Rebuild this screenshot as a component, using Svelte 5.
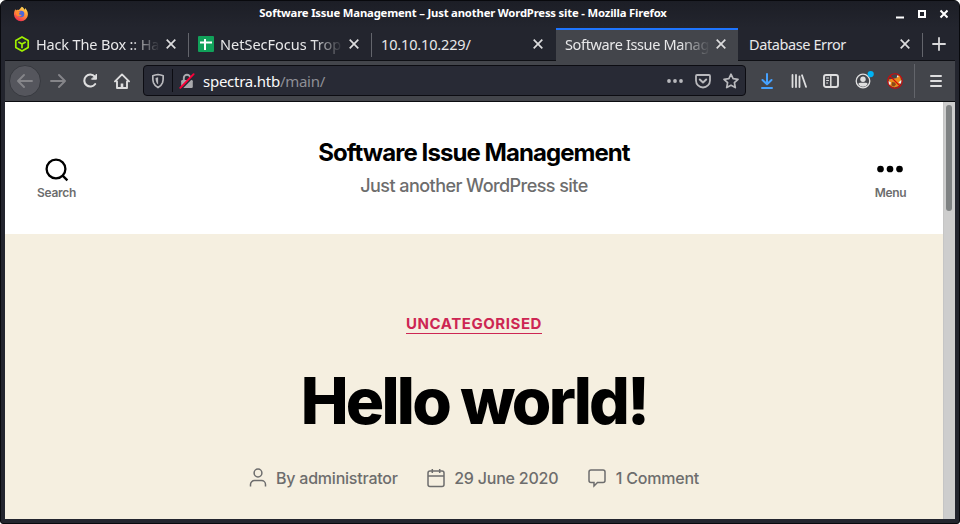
<script>
  const tabs = [
    { title: 'Hack The Box :: Ha', icon: 'htb', w: 184, spacing: -0.16, fade: true },
    { title: 'NetSecFocus Trop', icon: 'sheet', w: 183, spacing: 0, fade: true },
    { title: '10.10.10.229/', w: 184, spacing: -0.15 },
    { title: 'Software Issue Manag', w: 182, spacing: -0.36, fade: true, active: true },
    { title: 'Database Error', w: 185, spacing: -0.4 }
  ];
</script>

<div class="window">
  <header class="titlebar">
    <svg class="fox" width="16" height="16" viewBox="0 0 16 16">
      <defs>
        <linearGradient id="flame" x1="0.8" y1="0" x2="0.3" y2="1">
          <stop offset="0" stop-color="#ffe45a" /><stop offset=".45" stop-color="#ff9638" /><stop offset="1" stop-color="#f02852" />
        </linearGradient>
      </defs>
      <path fill="url(#flame)" d="M8.8.8C10.3 1.4 11 2.6 11.4 3.7c.5-.3.7-.8.8-1.6 1.6 1.7 2.9 4.1 2.7 6.6A7 7 0 0 1 8 15.3 7 7 0 0 1 1 8.5C.9 6.3 1.5 4.5 2.5 2.9c.1.8.3 1.2.6 1.5C3.9 3.7 4.5 3.6 5.5 4 6.7 3.500 7.400 2.300 8.800.8Z" />
      <circle cx="8" cy="8" r="3.300" fill="#4a65dc" />
      <path fill="#ff8a30" d="M3.200 4.500 6 5.200c.5.3 1.200.5 1.800.6-.4.8-1.300.8-1.700 1.400-.3 1 .4 1.700 1.500 1.500 1-.2 1.400.1 1.300.4-1 1.500-3 1.900-4.700.6C2.600 8.500 2.500 6.500 3.200 4.500Z" />
    </svg>
    <div class="caption">Software Issue Management – Just another WordPress site - Mozilla Firefox</div>
    <svg class="controls" width="56" height="14" viewBox="0 0 56 14">
      <path d="M4 10.500h8" stroke="#fff" stroke-width="2" />
      <rect x="27" y="4" width="6" height="6" fill="none" stroke="#fff" stroke-width="2" />
      <path d="m48.500 3.500 7 7m0-7-7 7" stroke="#fff" stroke-width="2" />
    </svg>
  </header>

  <nav class="tabs">
    {#each tabs as tab}
      <div class="tab" class:active={tab.active} style:width="{tab.w}px" style:letter-spacing="{tab.spacing}px">
        {#if tab.icon === 'htb'}
          <svg width="16" height="16" viewBox="0 0 16 16" fill="none" stroke="#9fef00" stroke-width="1.700" stroke-linejoin="round">
            <path d="M8 .9 14.200 4.400v7.200L8 15.100l-6.200-3.500V4.400ZM4.300 5.900 8 8l3.700-2.100M8 8v4.200" />
          </svg>
        {:else if tab.icon === 'sheet'}
          <svg width="16" height="16" viewBox="0 0 16 16">
            <rect width="16" height="16" rx="1" fill="#11a15a" />
            <path d="M2 6.500h12M7 3v11" stroke="#fff" stroke-width="2" />
          </svg>
        {/if}
        <span class="label" class:fade={tab.fade}>{tab.title}</span>
        <svg class="close" width="10" height="10" viewBox="0 0 10 10"><path d="m.7.700 8.600 8.600m0-8.600L.7 9.300" stroke="currentColor" stroke-width="1.700" /></svg>
      </div>
    {/each}
    <div class="plus">
      <svg width="14" height="14" viewBox="0 0 14 14"><path d="M7 .3v13.400M.3 7h13.400" stroke="#d9d9da" stroke-width="1.800" /></svg>
    </div>
  </nav>

  <div class="toolbar">
    <div class="btn back">
      <svg width="16" height="16" viewBox="0 0 16 16" fill="none" stroke="#858589" stroke-width="1.900" stroke-linecap="round" stroke-linejoin="round"><path d="M15 8H1.500M7 2 1 8l6 6" /></svg>
    </div>
    <div class="btn">
      <svg width="16" height="16" viewBox="0 0 16 16" fill="none" stroke="#858589" stroke-width="1.900" stroke-linecap="round" stroke-linejoin="round"><path d="M1 8h13.500M9 2l6 6-6 6" /></svg>
    </div>
    <div class="btn">
      <svg width="16" height="16" viewBox="0 0 16 16" fill="none" stroke="#dededf" stroke-width="2.100" stroke-linecap="round"><path d="M12.800 3.600A6 6 0 1 0 13.200 11" /><path d="M14.500 1.500v4.700H9.800Z" fill="#dededf" stroke-width="1" stroke-linejoin="round" /></svg>
    </div>
    <div class="btn">
      <svg width="16" height="16" viewBox="0 0 16 16" fill="none" stroke="#dededf" stroke-width="1.900" stroke-linecap="round" stroke-linejoin="round"><path d="M1 8.400 8 1.400l7 7M3 8.500V15h10V8.500" /><path d="M8 14v-3.500" stroke-width="2.600" stroke-linecap="butt" /></svg>
    </div>

    <div class="urlbar">
      <svg class="shield" width="16" height="16" viewBox="0 0 16 16" fill="none" stroke="#b9b9bd" stroke-width="1.700" stroke-linejoin="round">
        <path d="M8 1.500c2.200.3 3.800.7 5.200 1.200.1 3 0 5-.7 7-.8 2.100-2.300 3.600-4.500 4.900-2.200-1.300-3.700-2.800-4.500-4.900-.7-2-.8-4-.7-7C4.200 2.200 5.800 1.800 8 1.500Z" />
        <path d="M8.100 4.200v7.300C6.500 10 5.600 8.200 5.500 4.900Z" fill="#b9b9bd" stroke="none" />
      </svg>
      <i class="divider"></i>
      <svg class="lock" width="16" height="16" viewBox="0 0 16 16">
        <path d="M4.800 7.500V5a3.200 3.200 0 0 1 6.400 0v2.500" fill="none" stroke="#a9a9ad" stroke-width="1.900" />
        <rect x="2.200" y="7" width="11.600" height="8" rx="1.300" fill="#a9a9ad" />
        <path d="m2 16 14-14.500" stroke="#282a35" stroke-width="2" />
        <path d="M1.300 14.800 14.600 1.200" stroke="#ff0039" stroke-width="1.900" stroke-linecap="round" />
      </svg>
      <span class="url">spectra.htb<em>/main/</em></span>
      <svg class="page-icon" width="16" height="16" viewBox="0 0 16 16" fill="#b9b9bd"><circle cx="2" cy="8" r="1.900" /><circle cx="8" cy="8" r="1.900" /><circle cx="14" cy="8" r="1.900" /></svg>
      <svg class="page-icon" width="16" height="16" viewBox="0 0 16 16" fill="none" stroke="#b9b9bd" stroke-width="1.800" stroke-linecap="round" stroke-linejoin="round"><path d="M2 2h12q1 0 1 1v4.500a7 7 0 0 1-14 0V3q0-1 1-1Z" /><path d="m4.800 6.500 3.200 3 3.200-3" stroke-width="2" /></svg>
      <svg class="page-icon" width="16" height="16" viewBox="0 0 16 16" fill="none" stroke="#b9b9bd" stroke-width="1.700" stroke-linejoin="round"><path d="m8 1.200 2.100 4.400 4.900.7-3.600 3.400.9 4.900L8 12.300l-4.300 2.300.9-4.900L1 6.300l4.900-.7Z" /></svg>
    </div>

    <div class="btn">
      <svg width="16" height="16" viewBox="0 0 16 16" fill="none" stroke="#45a1ff" stroke-width="2" stroke-linecap="round" stroke-linejoin="round"><path d="M8 1v10M3.500 7 8 11.300 12.500 7M3 15h10" /></svg>
    </div>
    <div class="btn">
      <svg width="16" height="16" viewBox="0 0 16 16" fill="none" stroke="#dededf" stroke-width="1.800" stroke-linecap="round"><path d="M1.500 2v12M5 2v12M8.500 3.500V14M11 2.300l4 11.500" /></svg>
    </div>
    <div class="btn">
      <svg width="16" height="16" viewBox="0 0 16 16" fill="none" stroke="#dededf"><rect x="1" y="2" width="14" height="12" rx="2" stroke-width="1.900" /><path d="M7.800 2v12" stroke-width="1.500" /><path d="M3.200 5h2.800M3.200 7.500h2.800M3.200 10H5" stroke-width="1" /></svg>
    </div>
    <div class="btn account">
      <svg width="22" height="22" viewBox="0 0 22 22"><circle cx="11" cy="11" r="6.800" fill="none" stroke="#dededf" stroke-width="1.300" /><circle cx="11" cy="9.300" r="2.700" fill="#dededf" /><path d="M6.200 14c1.200-2 2.600-1.200 4.800-1.200s3.600-.8 4.800 1.200A5.500 5.500 0 0 1 11 16.700 5.500 5.500 0 0 1 6.200 14Z" fill="#dededf" /><circle cx="18.700" cy="4.100" r="3.100" fill="#00b3f4" /></svg>
    </div>
    <div class="btn">
      <svg width="16" height="16" viewBox="0 0 16 16">
        <path d="M1.500 6.500 10 5l1-3.200 2.200 1.700 1.200 5-2.500 4.500-4.500 1.500-4-1.500Z" fill="#ed8c1c" /><path d="M1.400 8 4 9.500l-1 3-1.700-2Zm10 1.500 3.200-2.700-.5 4ZM9.500 4.500l1.200-2.500 1 2Z" fill="#eee" /><path d="m5 9 3 .5 1 2-2 2-2.500-1Z" fill="#8b4b17" />
        <circle cx="8" cy="8" r="7.300" fill="none" stroke="#d20a0a" stroke-width="1.100" /><path d="m3 3 10 10" stroke="#d20a0a" stroke-width="1.100" />
      </svg>
    </div>
    <i class="toolsep"></i>
    <div class="btn">
      <svg width="16" height="16" viewBox="0 0 16 16" stroke="#dededf" stroke-width="2" stroke-linecap="round"><path d="M3 3h10M3 8h10M3 13h10" /></svg>
    </div>
  </div>

  <div class="view">
    <main>
      <div class="site-header">
        <div class="toggle search">
          <svg width="24" height="24" viewBox="0 0 24 24" fill="none" stroke="#000" stroke-width="2.300"><circle cx="11" cy="11" r="9.400" /><path d="m17.400 17.400 5 5" /></svg>
          <span>Search</span>
        </div>
        <div class="branding">
          <h1>Software Issue Management</h1>
          <p>Just another WordPress site</p>
        </div>
        <div class="toggle menu">
          <svg width="26" height="24" viewBox="0 0 26 24"><circle cx="3.500" cy="11" r="3.350" /><circle cx="13" cy="11" r="3.350" /><circle cx="22.500" cy="11" r="3.350" /></svg>
          <span>Menu</span>
        </div>
      </div>
      <article>
        <a class="category" href="#uncategorised">Uncategorised</a>
        <h2>Hello world!</h2>
        <div class="meta">
          <div class="item author">
            <svg width="18" height="20" viewBox="0 0 18 20"><path d="M1.500 18.500v-2a4 4 0 0 1 4-4h7a4 4 0 0 1 4 4v2" /><circle cx="9" cy="5" r="3.900" /></svg>
            <span>By administrator</span>
          </div>
          <div class="item date">
            <svg width="18" height="20" viewBox="0 0 18 20"><rect x="1" y="3" width="16" height="15.500" rx="2" /><path d="M1 8h16M5.300 1v4M12.700 1v4" /></svg>
            <span>29 June 2020</span>
          </div>
          <div class="item comment">
            <svg width="18" height="20" viewBox="0 0 18 20"><path d="M3 2h12a2 2 0 0 1 2 2v8.500a2 2 0 0 1-2 2H9.500L6 18v-3.500H3a2 2 0 0 1-2-2V4a2 2 0 0 1 2-2Z" /></svg>
            <span>1 Comment</span>
          </div>
        </div>
      </article>
    </main>
    <div class="scrollbar"><div class="thumb"></div></div>
  </div>
</div>

<style>
  :global(body) { background: #fff; overflow: hidden; }
  * { box-sizing: border-box; }
  svg { display: block; flex: none; }
  .window { width: 960px; height: 524px; display: flex; flex-direction: column; background: #23252e; border: 1px solid #08090d; border-radius: 6px 6px 3px 3px; overflow: hidden; padding: 0 4px 4px; font-family: 'Noto Sans', sans-serif; }
  .titlebar { height: 27px; flex: none; display: flex; align-items: center; margin: 0 -4px; padding: 0 11px 1px 12px; background: linear-gradient(#1c1e26, #23252e); color: #fff; }
  .caption { flex: 1; text-align: center; font-size: 11.3px; font-weight: 700; letter-spacing: -.18px; line-height: 16px; white-space: nowrap; padding: 0 0 2px 5px; }
  .tabs { height: 33px; flex: none; display: flex; border-bottom: 1px solid #0f1015; margin-bottom: -1px; z-index: 1; }
  .tab { display: flex; align-items: center; flex: none; padding: 0 13px 0 9px; color: #e8e8e9; font-size: 14.5px; position: relative; }
  .tab > svg:first-child { margin-right: 6px; }
  .tab::after { content: ''; position: absolute; right: 0; top: 5px; width: 1px; height: 24px; background: #63656c; }
  .tab:nth-child(3)::after, .active::after { display: none; }
  .active { background: #43454b; border-top: 2px solid #1f75fe; height: 33px; padding-bottom: 3px; padding-right: 12px; }
  .tab:nth-child(5) { padding-left: 11px; }
  .label { flex: 1; min-width: 0; overflow: hidden; white-space: nowrap; line-height: 24px; }
  .fade { mask-image: linear-gradient(to left, transparent, #000 30px); }
  .close { margin-left: 6px; color: #dcdcdd; }
  .plus { flex: 1; display: flex; align-items: center; justify-content: center; }
  .toolbar { height: 42px; flex: none; display: flex; align-items: center; background: #43454b; border-bottom: 1px solid #0b0c10; padding: 0 3px 0 4px; }
  .btn { width: 32px; height: 32px; flex: none; display: flex; align-items: center; justify-content: center; }
  .back { background: #55565d; border: 1px solid #37393f; border-radius: 50%; margin-right: 1px; }
  .urlbar { flex: none; width: 603px; height: 31px; margin: 0 5px 0 5px; display: flex; align-items: center; background: #282a35; border: 1px solid #0c0c12; border-radius: 4px; padding: 0 6px; color: #f9f9fa; }
  .divider { width: 1px; height: 23px; background: #0c0c12; margin: 0 6px; }
  .url { flex: 1; margin-left: 8px; font-size: 15px; letter-spacing: -.26px; white-space: nowrap; }
  .url em { font-style: normal; color: #8e8f96; }
  .page-icon { margin-left: 12px; }
  .toolsep { width: 1px; height: 34px; background: #63656b; margin: 0 5px 0 3px; }
  .view { flex: 1; min-height: 0; display: flex; overflow: hidden; }
  main { flex: 1; background: #f5efe0; font-family: Inter, sans-serif; overflow: hidden; color: #6d6d6d; }
  .site-header { height: 132px; background: #fff; display: flex; justify-content: space-between; align-items: flex-start; }
  .branding { text-align: center; padding: 36px 0 0 2px; }
  h1 { margin: 0; font-size: 24px; font-weight: 700; line-height: 30px; letter-spacing: -.94px; color: #000; }
  .branding p { margin: 5px 0 0; font-size: 18px; font-weight: 500; line-height: 26px; letter-spacing: -.0311em; }
  .toggle { width: 103px; padding-top: 56px; display: flex; flex-direction: column; align-items: center; font-size: 12px; font-weight: 600; line-height: 16px; letter-spacing: -.3px; }
  .toggle span { margin-top: 3px; }
  .menu { width: 105px; }
  article { display: flex; flex-direction: column; align-items: center; }
  .category { margin-top: 81px; color: #cd2653; font-size: 15px; line-height: 17px; font-weight: 700; letter-spacing: .0366em; text-transform: uppercase; text-decoration: none; border-bottom: 1px solid #cd2653; height: 19px; }
  h2 { margin: 31px 0 0; color: #000; font-size: 64px; line-height: 72px; font-weight: 800; letter-spacing: -2.8px; white-space: nowrap; }
  .meta { display: flex; margin-top: 29px; font-size: 16px; font-weight: 500; line-height: 24px; letter-spacing: -.22px; gap: 29.500px; }
  .item { display: flex; align-items: center; gap: 9px; white-space: nowrap; }
  .comment { gap: 10px; }
  .item svg { fill: none; stroke: #6d6d6d; stroke-width: 1.500; }
  .scrollbar { width: 12px; background: #cdcdcd; border-left: 1px solid #c5c5c5; padding: 3px 3px 0 2px; }
  .thumb { width: 6px; height: 106px; border-radius: 3px; background: #7f8283; }
</style>
